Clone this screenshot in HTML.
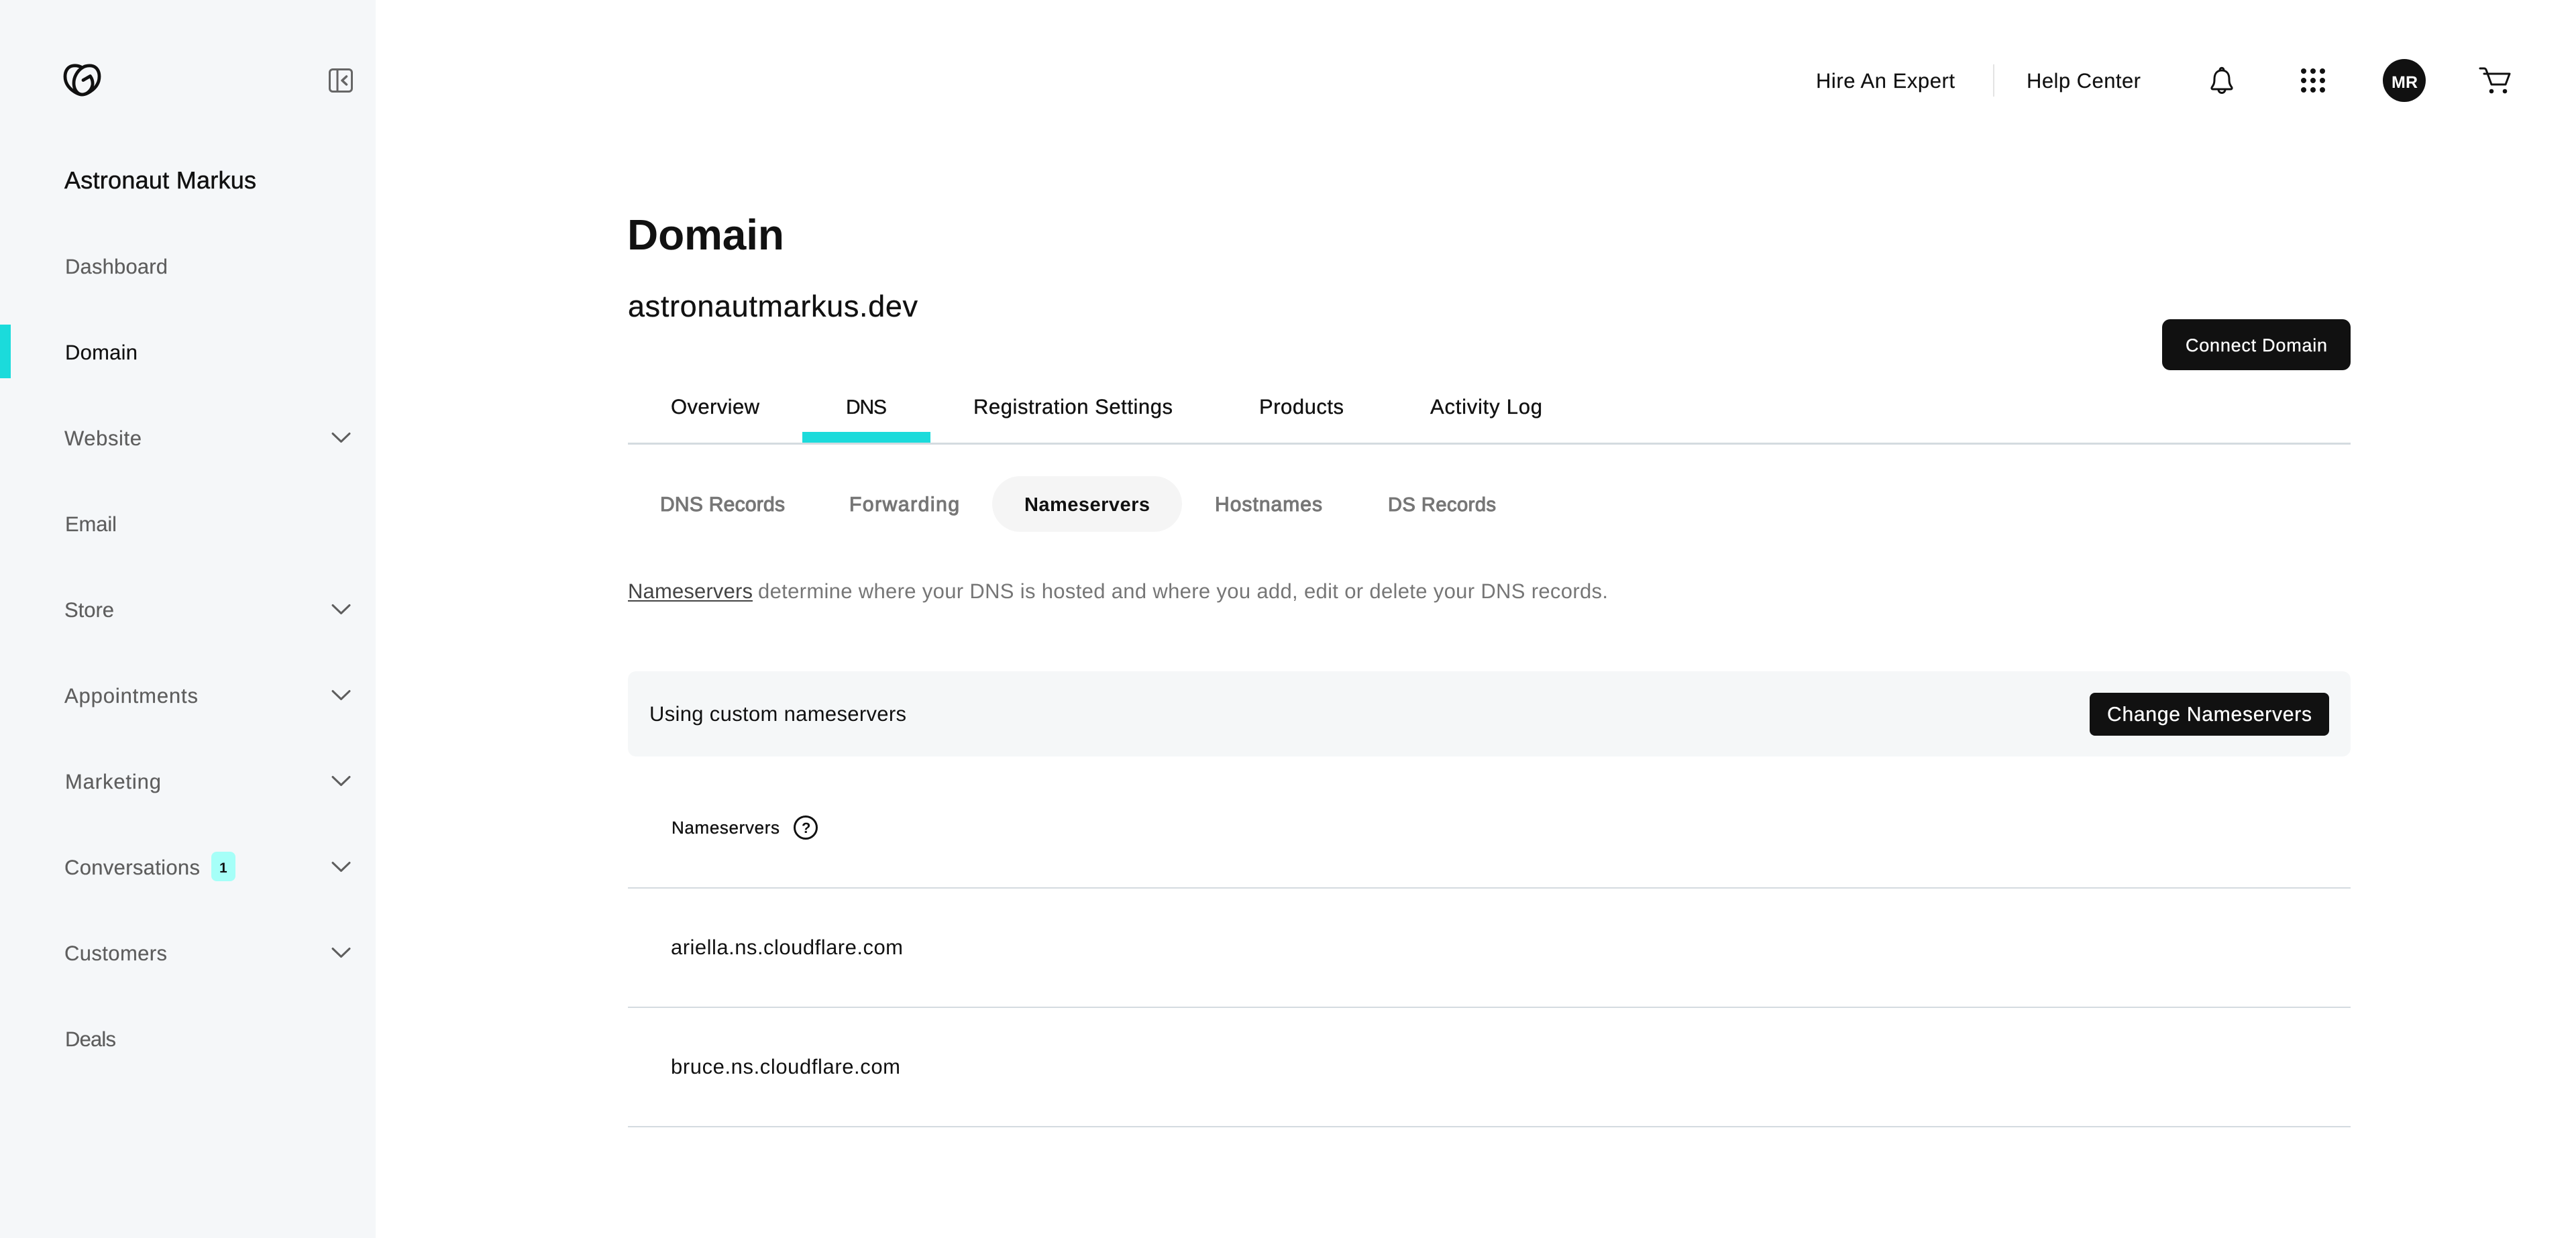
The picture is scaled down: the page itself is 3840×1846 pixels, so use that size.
<!DOCTYPE html>
<html lang="en">
<head>
<meta charset="utf-8">
<title>Domain - astronautmarkus.dev</title>
<style>
html,body{margin:0;padding:0;background:#fff;width:3840px;height:1846px;overflow:hidden}
svg{display:block}
text{font-family:"Liberation Sans",sans-serif;fill:#111;text-rendering:geometricPrecision;white-space:pre}
.nav{font-size:31px;fill:#5e5e5e;stroke:#5e5e5e;stroke-width:.2px}
.dark{font-size:31px;fill:#111;stroke:#111;stroke-width:.35px}
.sub{font-size:30px;fill:#767676;stroke:#767676;stroke-width:1.1px}
.desc{font-size:31px;fill:#767676}
.ic{fill:none;stroke:#111;stroke-width:3;stroke-linecap:round;stroke-linejoin:round}
.ch{fill:none;stroke:#5e5e5e;stroke-width:3;stroke-linecap:round;stroke-linejoin:round}
</style>
</head>
<body>
<svg xmlns="http://www.w3.org/2000/svg" width="3840" height="1846" viewBox="0 0 3840 1846">
<rect width="3840" height="1846" fill="#fff"/>
<rect width="560" height="1846" fill="#f5f7f9"/>
<rect y="484" width="16" height="80" fill="#1bdbdb"/>

<!-- logo -->
<g fill="none" stroke="#111" stroke-width="4.800" stroke-linecap="round" stroke-linejoin="round">
<path d="M122.500 101C118 98 113 97.500 109 98C101 99 97 106 97 114C97 122 101 129 107 134C112 138 118 141 122.500 141C127 141 133 138 138 134C144 129 148 122 148 114C148 106 144 99 136 98C131 97.500 127 98 122.500 101"/>
<path d="M122.500 101C115 106 110 115 110 124C110 134 116 141 122.500 141C130 141 137 134 138 126C138.500 121 137 117 134.500 113.500L124 119.500"/>
</g>
<!-- collapse -->
<g fill="none" stroke="#666" stroke-width="3" stroke-linejoin="round" stroke-linecap="round">
<rect x="491.5" y="103.5" width="33" height="33" rx="4.5"/>
<path d="M503 103.5V136.5"/>
<path d="M516.5 114L510 120L516.5 126" stroke-width="3.5"/>
</g>

<text x="96" y="281" font-size="36" textLength="286" style="stroke:#111;stroke-width:.5px">Astronaut Markus</text>
<text class="nav" x="97" y="408" textLength="153">Dashboard</text>
<text class="nav" x="97" y="536" textLength="108" style="fill:#111;stroke:#111">Domain</text>
<text class="nav" x="96" y="664" textLength="115">Website</text>
<text class="nav" x="97" y="792" textLength="77">Email</text>
<text class="nav" x="96" y="920" textLength="74">Store</text>
<text class="nav" x="96" y="1048" textLength="199">Appointments</text>
<text class="nav" x="97" y="1176" textLength="143">Marketing</text>
<text class="nav" x="96" y="1304" textLength="202">Conversations</text>
<text class="nav" x="96" y="1432" textLength="153">Customers</text>
<text class="nav" x="97" y="1560" textLength="76">Deals</text>

<path class="ch" d="M496 646.500L508.500 658.500L521 646.500"/>
<path class="ch" d="M496 902.500L508.500 914.500L521 902.500"/>
<path class="ch" d="M496 1030.500L508.500 1042.500L521 1030.500"/>
<path class="ch" d="M496 1158.500L508.500 1170.500L521 1158.500"/>
<path class="ch" d="M496 1286.500L508.500 1298.500L521 1286.500"/>
<path class="ch" d="M496 1414.500L508.500 1426.500L521 1414.500"/>

<rect x="315" y="1270" width="36" height="44" rx="8" fill="#a6fff8"/>
<text x="327" y="1301" font-size="21" font-weight="700">1</text>

<!-- header -->
<text class="dark" x="2707" y="131" textLength="207" style="stroke-width:.15px">Hire An Expert</text>
<rect x="2971" y="96" width="2" height="48" fill="#e3e3e3"/>
<text class="dark" x="3021" y="131" textLength="170" style="stroke-width:.15px">Help Center</text>

<g class="ic">
<path d="M3312 105C3304 105 3301 111 3301 118C3301 124 3300 126 3298 129C3296 131 3297 133 3299 133L3325 133C3327 133 3328 131 3326 129C3324 126 3323 124 3323 118C3323 111 3320 105 3312 105Z"/>
<path d="M3309 105C3309 100 3315 100 3315 105"/>
<path d="M3307 133.500A5 5 0 0 0 3317 133.500"/>
</g>
<g fill="#111">
<circle cx="3434" cy="106" r="4"/><circle cx="3448" cy="106" r="4"/><circle cx="3462" cy="106" r="4"/>
<circle cx="3434" cy="120" r="4"/><circle cx="3448" cy="120" r="4"/><circle cx="3462" cy="120" r="4"/>
<circle cx="3434" cy="134" r="4"/><circle cx="3448" cy="134" r="4"/><circle cx="3462" cy="134" r="4"/>
<circle cx="3584" cy="120" r="32"/>
<circle cx="3714" cy="136" r="3.300"/><circle cx="3734" cy="136" r="3.300"/>
</g>
<text x="3565" y="131" font-size="25" font-weight="700" textLength="39" style="fill:#fff">MR</text>
<path class="ic" d="M3697 102H3703Q3705 102 3706 104L3714 126H3735L3741 110H3703" stroke-width="3.500"/>

<!-- title -->
<text x="935" y="372" font-size="64" font-weight="700" textLength="234">Domain</text>
<text x="936" y="472" font-size="45" textLength="432" style="stroke:#111;stroke-width:.3px">astronautmarkus.dev</text>

<rect x="3223" y="476" width="281" height="76" rx="12" fill="#111"/>
<text x="3258" y="524" font-size="27" textLength="211" style="fill:#fff;stroke:#fff;stroke-width:.3px">Connect Domain</text>

<!-- tabs -->
<text class="dark" x="1000" y="617" textLength="132">Overview</text>
<text class="dark" x="1261" y="617" textLength="61" style="font-size:30px">DNS</text>
<text class="dark" x="1451" y="617" textLength="297">Registration Settings</text>
<text class="dark" x="1877" y="617" textLength="126">Products</text>
<text class="dark" x="2132" y="617" textLength="167">Activity Log</text>
<rect x="936" y="660" width="2568" height="3" fill="#d4dbe0"/>
<rect x="1196" y="644" width="191" height="16" fill="#1bdbdb"/>

<!-- sub tabs -->
<rect x="1479" y="710" width="283" height="83" rx="41.500" fill="#f5f5f5"/>
<text class="sub" x="984" y="762" textLength="186">DNS Records</text>
<text class="sub" x="1266" y="762" textLength="164">Forwarding</text>
<text x="1527" y="762" font-size="29" font-weight="700" textLength="187">Nameservers</text>
<text class="sub" x="1811" y="762" textLength="160">Hostnames</text>
<text class="sub" x="2069" y="762" textLength="161" style="font-size:29px">DS Records</text>

<!-- description -->
<text x="936" y="892" font-size="31" textLength="186" style="fill:#444">Nameservers</text>
<rect x="936" y="895" width="186" height="2" fill="#444"/>
<text class="desc" x="1130" y="892" textLength="1267">determine where your DNS is hosted and where you add, edit or delete your DNS records.</text>

<!-- custom bar -->
<rect x="936" y="1001" width="2568" height="127" rx="12" fill="#f5f7f8"/>
<text x="968" y="1075" font-size="31" textLength="383">Using custom nameservers</text>
<rect x="3115" y="1033" width="357" height="64" rx="8" fill="#111"/>
<text x="3141" y="1075" font-size="30" textLength="305" style="fill:#fff;stroke:#fff;stroke-width:.3px">Change Nameservers</text>

<!-- table -->
<text x="1001" y="1243" font-size="26" textLength="161" style="stroke:#111;stroke-width:.35px">Nameservers</text>
<circle cx="1201" cy="1234" r="16.500" fill="none" stroke="#111" stroke-width="3"/>
<text x="1195" y="1242" font-size="22" font-weight="700">?</text>
<rect x="936" y="1323" width="2568" height="2" fill="#d4dbe0"/>
<text x="1000" y="1423" font-size="31" textLength="346">ariella.ns.cloudflare.com</text>
<rect x="936" y="1501" width="2568" height="2" fill="#d4dbe0"/>
<text x="1000" y="1601" font-size="31" textLength="342">bruce.ns.cloudflare.com</text>
<rect x="936" y="1679" width="2568" height="2" fill="#d4dbe0"/>
</svg>
</body>
</html>
